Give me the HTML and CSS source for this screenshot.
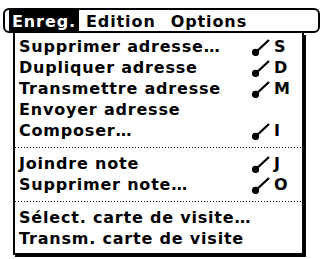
FILE: index.html
```html
<!DOCTYPE html>
<html>
<head>
<meta charset="utf-8">
<link rel="stylesheet" href="styles.css">
</head>
<body>
<div class="screen">
  <div class="menubar">
    <span class="title selected">Enreg.</span>
    <span class="title">Edition</span>
    <span class="title">Options</span>
  </div>
  <div class="dropdown">
    <div class="item"><span>Supprimer adresse…</span><span class="sc"><svg class="cmd" viewBox="0 0 20 18"><line x1="3.5" y1="14.5" x2="17" y2="2"/><circle cx="3.5" cy="14.5" r="2.5"/></svg><b>S</b></span></div>
    <div class="item"><span>Dupliquer adresse</span><span class="sc"><svg class="cmd" viewBox="0 0 20 18"><line x1="3.5" y1="14.5" x2="17" y2="2"/><circle cx="3.5" cy="14.5" r="2.5"/></svg><b>D</b></span></div>
    <div class="item"><span>Transmettre adresse</span><span class="sc"><svg class="cmd" viewBox="0 0 20 18"><line x1="3.5" y1="14.5" x2="17" y2="2"/><circle cx="3.5" cy="14.5" r="2.5"/></svg><b>M</b></span></div>
    <div class="item"><span>Envoyer adresse</span></div>
    <div class="item"><span>Composer…</span><span class="sc"><svg class="cmd" viewBox="0 0 20 18"><line x1="3.5" y1="14.5" x2="17" y2="2"/><circle cx="3.5" cy="14.5" r="2.5"/></svg><b>I</b></span></div>
    <div class="sep"></div>
    <div class="item"><span>Joindre note</span><span class="sc"><svg class="cmd" viewBox="0 0 20 18"><line x1="3.5" y1="14.5" x2="17" y2="2"/><circle cx="3.5" cy="14.5" r="2.5"/></svg><b>J</b></span></div>
    <div class="item"><span>Supprimer note…</span><span class="sc"><svg class="cmd" viewBox="0 0 20 18"><line x1="3.5" y1="14.5" x2="17" y2="2"/><circle cx="3.5" cy="14.5" r="2.5"/></svg><b>O</b></span></div>
    <div class="sep"></div>
    <div class="item"><span>Sélect. carte de visite…</span></div>
    <div class="item"><span>Transm. carte de visite</span></div>
  </div>
</div>
</body>
</html>
```
FILE: styles.css
```css
html, body {
  margin: 0;
  padding: 0;
  background: #fff;
}
.screen {
  width: 325px;
  height: 259px;
  overflow: hidden;
  padding-top: 8px;
  box-sizing: border-box;
  font-family: "DejaVu Sans", Verdana, sans-serif;
  font-weight: bold;
  color: #000;
}
.menubar {
  margin-left: 3px;
  width: 317px;
  height: 25px;
  box-sizing: border-box;
  border: 2px solid #000;
  border-radius: 6px;
  display: flex;
  align-items: stretch;
  padding-left: 4px;
  font-size: 16px;
  letter-spacing: 0.9px;
  line-height: 23px;
}
.title {
  padding: 0 3px 0 3px;
}
.title + .title {
  margin-left: 4px;
}
.title + .title + .title {
  margin-left: 9px;
}
.title.selected {
  background: #000;
  color: #fff;
}
.dropdown {
  margin-left: 13px;
  width: 291px;
  height: 222px;
  box-sizing: border-box;
  border: 2px solid #000;
  border-top: none;
  box-shadow: 2px 2px 0 #000;
  padding: 3px 13px 0 4px;
  font-size: 16px;
  letter-spacing: 0.8px;
}
.item {
  height: 21px;
  line-height: 21px;
  display: flex;
  justify-content: space-between;
  align-items: center;
  white-space: nowrap;
}
.sc {
  display: flex;
  align-items: center;
  gap: 2px;
}
.cmd {
  width: 20px;
  height: 18px;
  stroke: #000;
  stroke-width: 2.3;
  fill: #000;
}
.sc b {
  width: 15px;
  text-align: left;
}
.sep {
  height: 12px;
  margin: 0 -13px 0 -4px;
  background-image: repeating-linear-gradient(to right, #000 0 1px, transparent 1px 3px);
  background-size: 100% 1px;
  background-position: 0 6px;
  background-repeat: no-repeat;
}
```
